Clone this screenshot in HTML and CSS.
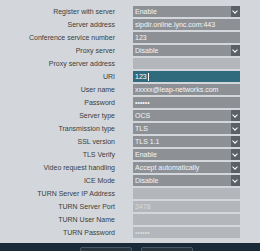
FILE: index.html
```html
<!DOCTYPE html>
<html>
  <head>
    <meta charset="utf-8"/>
    <title>Server settings</title>
    <link rel="stylesheet" href="styles.css">
  </head>
  <body>
    <div class="form">
      <div class="row"><span class="label">Register with server</span><span class="field select">Enable<i class="arrow"></i></span></div>
      <div class="row"><span class="label">Server address</span><span class="field">sipdir.online.lync.com:443</span></div>
      <div class="row"><span class="label">Conference service number</span><span class="field">123</span></div>
      <div class="row"><span class="label">Proxy server</span><span class="field select">Disable<i class="arrow"></i></span></div>
      <div class="row"><span class="label">Proxy server address</span><span class="field off"></span></div>
      <div class="row"><span class="label">URI</span><span class="field focus">123<b class="caret"></b></span></div>
      <div class="row"><span class="label">User name</span><span class="field">xxxxx@leap-networks.com</span></div>
      <div class="row"><span class="label">Password</span><span class="field">&bull;&bull;&bull;&bull;&bull;&bull;</span></div>
      <div class="row"><span class="label">Server type</span><span class="field select">OCS<i class="arrow"></i></span></div>
      <div class="row"><span class="label">Transmission type</span><span class="field select">TLS<i class="arrow"></i></span></div>
      <div class="row"><span class="label">SSL version</span><span class="field select">TLS 1.1<i class="arrow"></i></span></div>
      <div class="row"><span class="label">TLS Verify</span><span class="field select">Enable<i class="arrow"></i></span></div>
      <div class="row"><span class="label">Video request handling</span><span class="field select">Accept automatically<i class="arrow"></i></span></div>
      <div class="row"><span class="label">ICE Mode</span><span class="field select">Disable<i class="arrow"></i></span></div>
      <div class="row"><span class="label">TURN Server IP Address</span><span class="field off"></span></div>
      <div class="row"><span class="label">TURN Server Port</span><span class="field off">3478</span></div>
      <div class="row"><span class="label">TURN User Name</span><span class="field off"></span></div>
      <div class="row"><span class="label">TURN Password</span><span class="field off">&bull;&bull;&bull;&bull;&bull;&bull;</span></div>
    </div>
    <div class="footer">
      <span class="button"></span>
      <span class="button"></span>
    </div>
  </body>
</html>
```

FILE: styles.css
```css
* {
  margin: 0;
  padding: 0;
  box-sizing: border-box;
}

html {
  font-size: 7px;
  font-family: 'Liberation Sans', Arial, sans-serif;
}

body {
  width: 260px;
  height: 251px;
  overflow: hidden;
  background: #d3d7db;
}

.form {
  display: flex;
  flex-direction: column;
  gap: 2px;
  padding: 6px 0 5px;
}

.row {
  display: grid;
  grid-template-columns: 115px 107px;
  column-gap: 18px;
  height: 11px;
  align-items: center;
}

.label {
  text-align: right;
  color: #3a3d40;
  white-space: nowrap;
}

.field {
  display: flex;
  align-items: center;
  height: 11px;
  padding: 0 2px;
  background: #8d9196;
  color: #f4f5f6;
  white-space: nowrap;
  overflow: hidden;
}

.field.off {
  background: #b3b7bb;
  color: #d8dbde;
}

.field.focus {
  background: #2f6b7c;
  color: #fff;
}

.caret {
  display: inline-block;
  width: 1px;
  height: 8px;
  margin-left: 1px;
  background: #fff;
}

.select {
  position: relative;
}

.arrow {
  position: absolute;
  right: 0;
  top: 0;
  width: 9px;
  height: 11px;
  background: #5b6067;
}

.arrow::after {
  content: '';
  position: absolute;
  left: 2px;
  top: 3px;
  width: 3px;
  height: 3px;
  border-right: 1.5px solid #fff;
  border-bottom: 1.5px solid #fff;
  transform: rotate(45deg);
}

.footer {
  display: flex;
  justify-content: center;
  gap: 9px;
  height: 20px;
  padding: 4px 0 0 13px;
  background: #1b2a37;
}

.button {
  width: 52px;
  height: 14px;
  border: 1px solid #4a5764;
  border-radius: 2px;
  background: #26343f;
}
```
